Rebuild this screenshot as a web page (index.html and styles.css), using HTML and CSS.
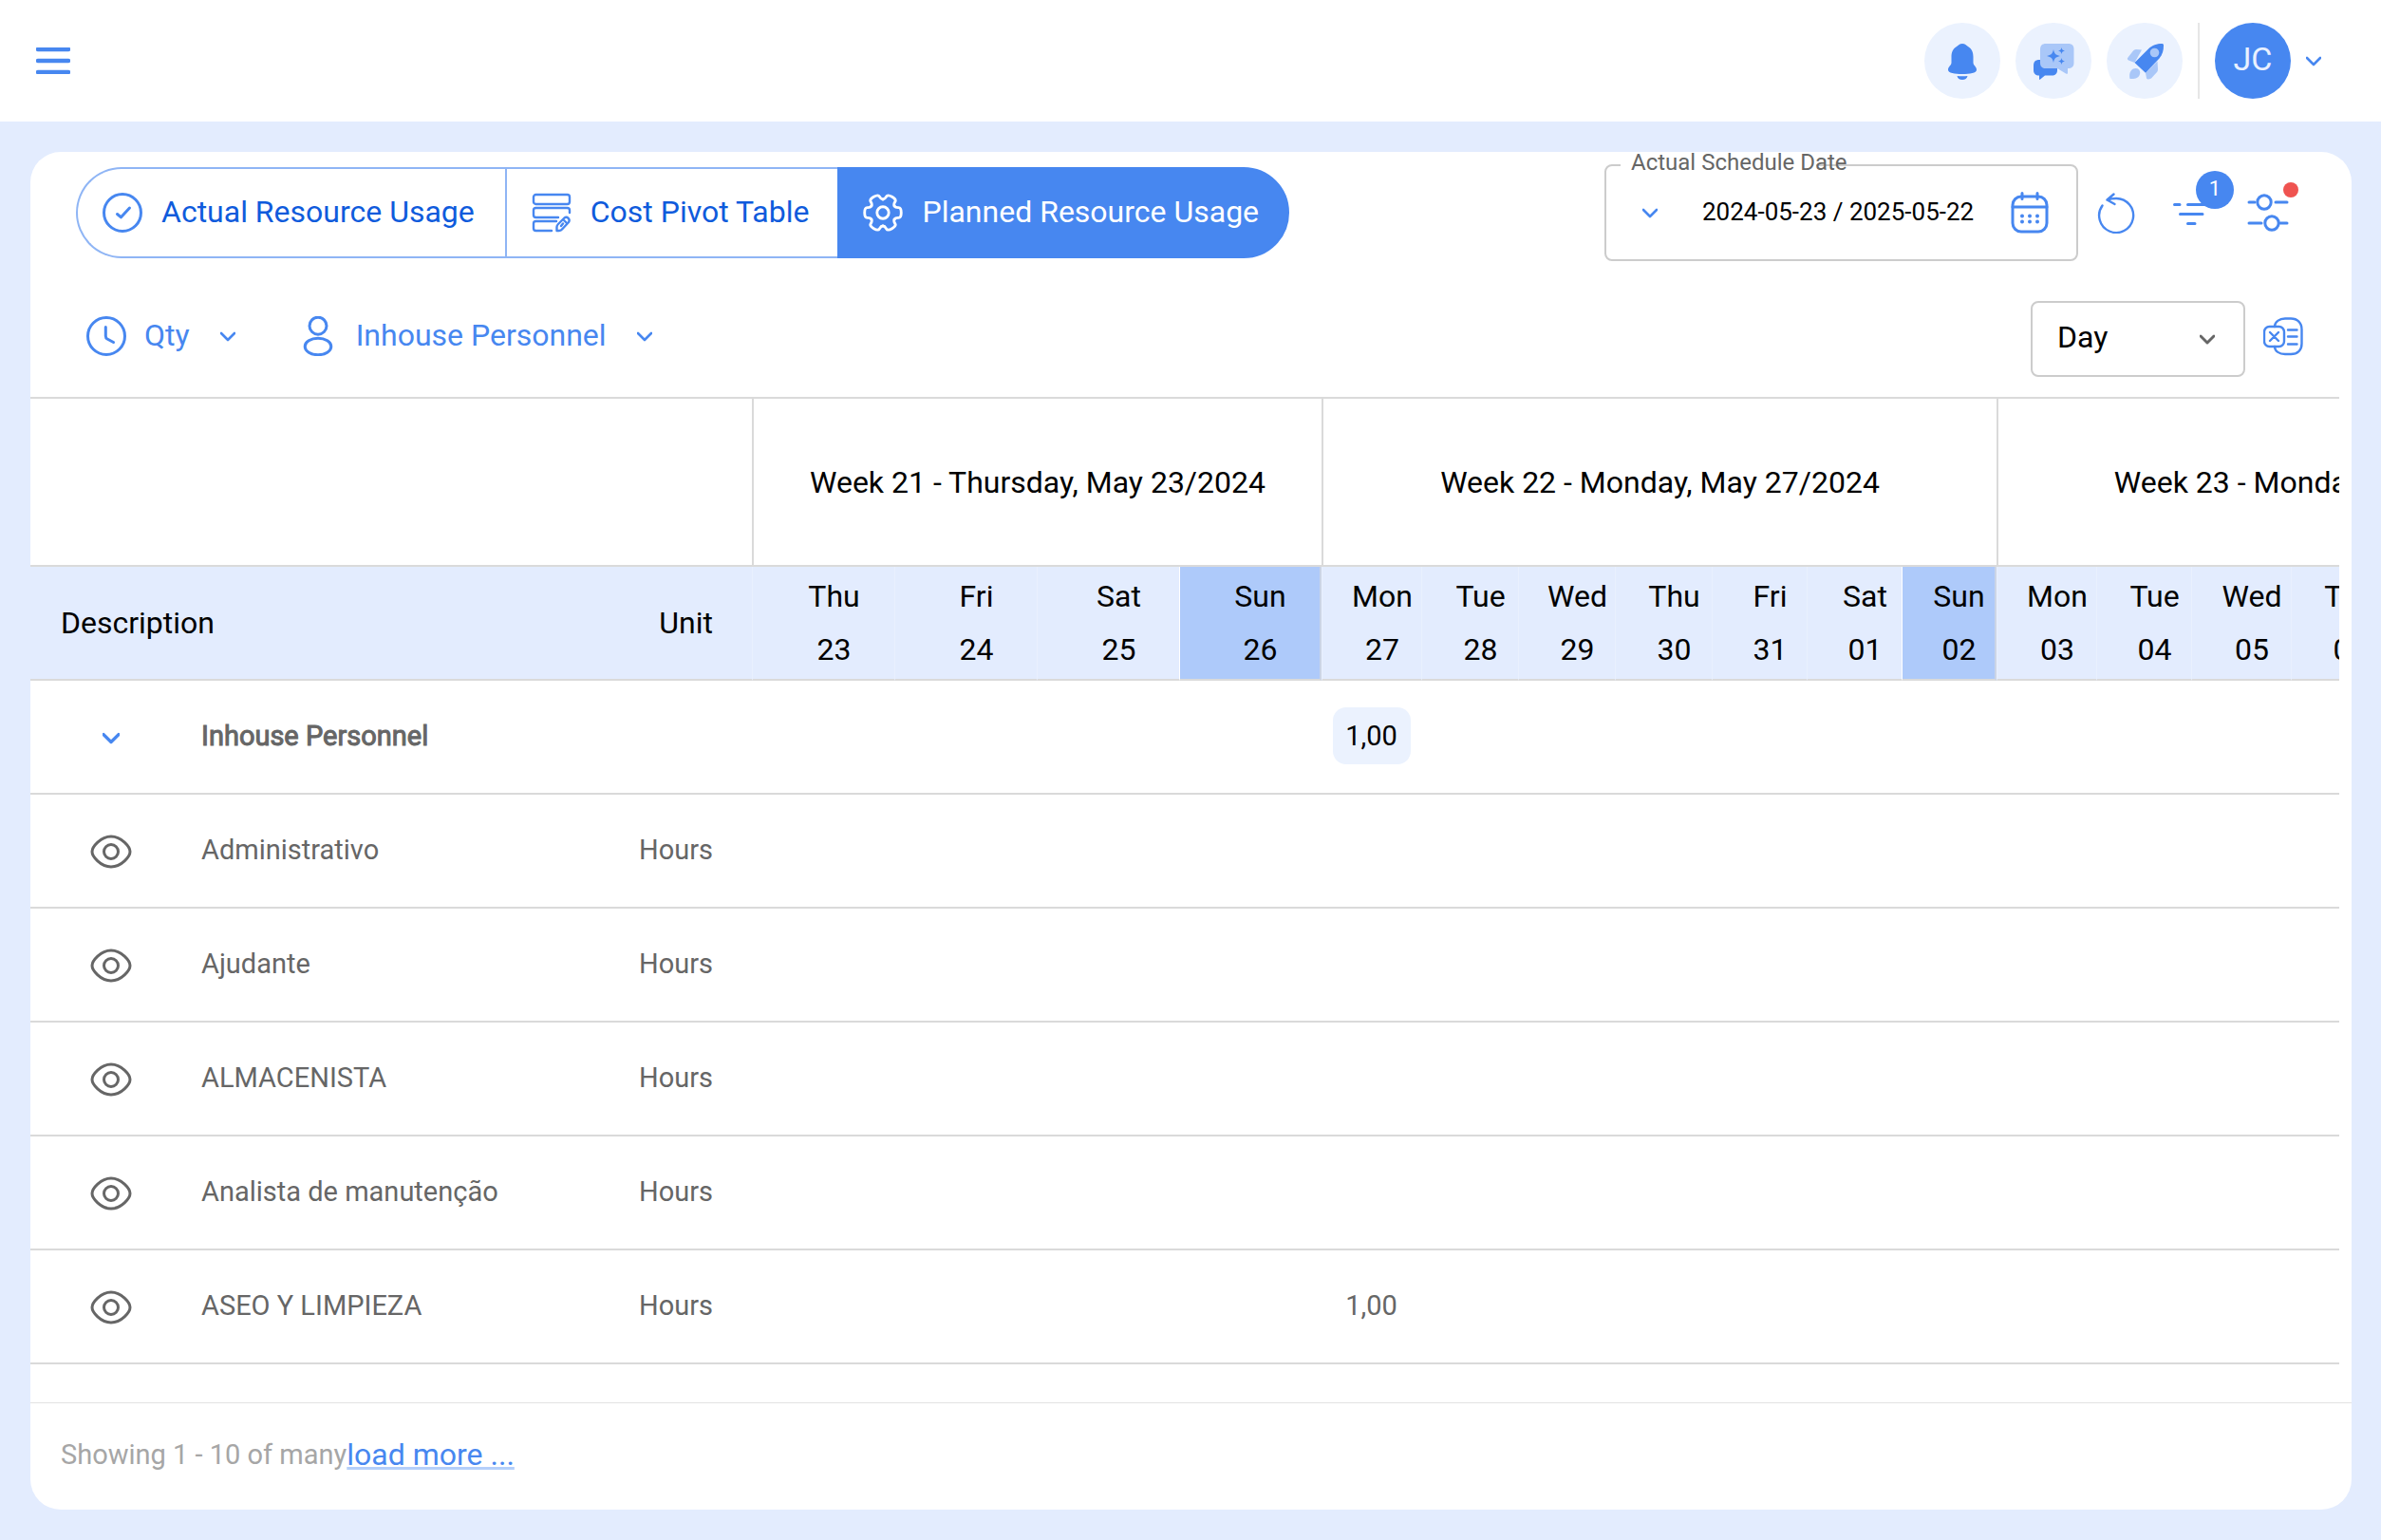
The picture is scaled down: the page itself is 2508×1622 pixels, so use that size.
FILE: index.html
```html
<!DOCTYPE html>
<html lang="en">
<head>
<meta charset="utf-8">
<meta name="viewport" content="width=device-width, initial-scale=1">
<title>Planned Resource Usage</title>
<link rel="stylesheet" href="styles.css">
</head>
<body>
<svg class="sprite" aria-hidden="true">
  <symbol id="chevron" viewBox="0 0 16 16"><path d="M1 5l7 7 7-7"/></symbol>
  <symbol id="eye" viewBox="-22 -22 44 44"><path d="M-20 0C-20-5-11-16 0-16S20-5 20 0 11 16 0 16-20 5-20 0z"/><circle r="7.5"/></symbol>
  <symbol id="sparkle" viewBox="-8 -8 16 16"><path d="M0-8C1.300-2.500 2.500-1.300 8 0 2.500 1.300 1.300 2.500 0 8-1.300 2.500-2.500 1.300-8 0-2.500-1.300-1.300-2.500 0-8z"/></symbol>
  <symbol id="cog" viewBox="-22 -22 44 44">
    <g id="cog-teeth">
      <path id="tooth" d="M12.700-7.300C13.900-5.300 15.900-5.600 17.300-5.600 19.600-5.600 20.200-4 20.200 0S19.600 5.600 17.300 5.600C15.900 5.600 13.900 5.300 12.700 7.300"/>
      <use href="#tooth" transform="rotate(60)"/><use href="#tooth" transform="rotate(120)"/><use href="#tooth" transform="rotate(180)"/><use href="#tooth" transform="rotate(240)"/><use href="#tooth" transform="rotate(300)"/>
    </g>
    <circle r="6.500"/>
  </symbol>
</svg>

<header class="topbar">
  <button class="menu-button" type="button" aria-label="Menu">
    <svg class="icon-menu" viewBox="0 0 36 28"><path d="M2 2h32M2 14h32M2 26h32"/></svg>
  </button>
  <div class="topbar-actions">
    <button class="round-button" type="button" aria-label="Notifications">
      <svg class="glyph" viewBox="-20 -20 40 40"><path class="solid" d="M0-18C3-18 4-16.500 6-15 10-12.500 11.500-9 11.500-4V2C11.500 5 15 6 15 9.500 15 13 8 14 0 14S-15 13-15 9.500C-15 6-11.500 5-11.500 2V-4C-11.500-9-10-12.500-6-15-4-16.500-3-18 0-18zM-5.500 16Q0 16.600 5.500 16C5 18.500 3 20 0 20S-5 18.500-5.500 16z"/></svg>
    </button>
    <button class="round-button" type="button" aria-label="Assistant">
      <svg class="glyph glyph-wide" viewBox="-22 -20 46 40">
        <path class="solid" d="M-14-1H0V15.500H-8L-13.500 20Q-14 20-14 19V15.500C-18 15.500-20 13.500-20 10V5C-20 1-18-1-14-1zM-2 0H5V10C5 13.500 3 15.500-1 15.500z"/>
        <path class="pale" d="M-7-18H16.500C20.500-18 22.500-16 22.500-12V2C22.500 6 20.500 8 16 8V13C16 14 15 14 14 13.500L5 8H-7C-11 8-13 6-13 2V-12C-13-16-11-18-7-18z"/>
        <use class="solid" href="#sparkle" x="-6" y="-12" width="14" height="14"/>
        <use class="solid" href="#sparkle" x="6" y="-14" width="7" height="7"/>
        <use class="solid" href="#sparkle" x="6" y="-3" width="7" height="7"/>
      </svg>
    </button>
    <button class="round-button" type="button" aria-label="What is new">
      <svg class="glyph" viewBox="-20 -20 40 40">
        <path class="pale" d="M-3-11.500L-10.500 2-17-.5Q-19-1.500-17.500-3.500L-12-10.500Q-11-12-9-12zM1 12.700L13.500 .5 14 9Q14 11 13 12L7 18.500Q3 20.500 2 18.500zM-15.500 19C-17 13-14 8-9.500 8-6 8-4 11-5 14-6 18-10 19.500-15.500 19z"/>
        <path class="solid" d="M20-16C20-11 19-7 15.500-2.500L1 12.700-10.500 2 4-12.500C8-16.500 13-18 18-18 19.500-18 20-17.500 20-16z"/>
        <circle class="pale" cx="10.500" cy="-8.500" r="4.800"/>
      </svg>
    </button>
    <span class="divider"></span>
    <button class="account" type="button" aria-label="Account">
      <span class="avatar">JC</span>
      <svg class="chevron"><use href="#chevron"/></svg>
    </button>
  </div>
</header>

<main class="panel">
  <div class="toolbar">
    <nav class="tabs" aria-label="Views">
      <button class="tab" type="button">
        <svg class="icon" viewBox="-21 -21 42 42"><circle r="19.500"/><path d="M-5.500 1.500L-1.500 4.800 7.500-5"/></svg>
        <span>Actual Resource Usage</span>
      </button>
      <button class="tab" type="button">
        <svg class="icon icon-fine" viewBox="0 0 42 42"><rect x="2" y="2" width="38" height="10" rx="2.500"/><path d="M40 21V18.500Q40 16 37.500 16H4.500Q2 16 2 18.500V23.500Q2 26 4.500 26H28M26 30H4.500Q2 30 2 32.500V37.500Q2 40 4.500 40H21M26.500 40V36Q26.500 34.500 28 33L34.500 26.500C37.500 24.500 41 28 39 31L32.500 38Q31 40 29 40zM33.500 28.500L37.500 32.500M31 35L33 32.500"/></svg>
        <span>Cost Pivot Table</span>
      </button>
      <button class="tab tab-active" type="button" aria-current="page">
        <svg class="icon" viewBox="-22 -22 44 44"><use href="#cog" x="-22" y="-22" width="44" height="44"/></svg>
        <span>Planned Resource Usage</span>
      </button>
    </nav>
    <div class="toolbar-end">
      <fieldset class="date-field">
        <legend><label for="schedule">Actual Schedule Date</label></legend>
        <div class="date-content">
          <button type="button" aria-label="Date presets"><svg class="chevron"><use href="#chevron"/></svg></button>
          <input id="schedule" type="text" value="2024-05-23 / 2025-05-22">
          <button type="button" aria-label="Open calendar">
            <svg class="icon icon-tool" viewBox="0 0 44 44"><rect x="4" y="5" width="36" height="37" rx="9"/><path d="M4 16H40M14 1.500V7.500M30 1.500V7.500"/><path class="dots" d="M14 25.500h0M22 25.500h0M30 25.500h0M14 31.500h0M22 31.500h0M30 31.500h0"/></svg>
          </button>
        </div>
      </fieldset>
      <div class="tools">
        <button class="tool" type="button" aria-label="Refresh">
          <svg class="icon icon-tool icon-fine" viewBox="0 0 44 44"><path d="M12.500 8.500Q17 7 22 7A18 18 0 1 1 7.500 14.500M19.500 2.500L12.500 8.500 20.500 13"/></svg>
        </button>
        <button class="tool" type="button" aria-label="Filter">
          <svg class="icon icon-tool" viewBox="0 0 44 44"><path d="M3.500 13.500H9M17.500 13.500H40M9.500 23.500H33M17.500 33.500H25"/></svg>
          <span class="badge">1</span>
        </button>
        <button class="tool" type="button" aria-label="Settings">
          <svg class="icon icon-tool" viewBox="0 0 44 44"><circle cx="18" cy="11" r="7.200"/><circle cx="26" cy="33" r="7.200"/><path d="M2 11H8M30 11H42M2 33H15M35 33H42"/></svg>
          <span class="dot"></span>
        </button>
      </div>
    </div>
  </div>

  <div class="filters">
    <button class="picker" type="button">
      <svg class="icon" viewBox="-21 -21 42 42"><circle r="19.500"/><path d="M-.7-9.500V0Q-.7 2 1 3L7.500 6.500"/></svg>
      <span>Qty</span>
      <svg class="chevron"><use href="#chevron"/></svg>
    </button>
    <button class="picker" type="button">
      <svg class="icon" viewBox="-21 -21 42 42"><circle cy="-10.800" r="9"/><ellipse cy="11" rx="13.800" ry="8.700"/></svg>
      <span>Inhouse Personnel</span>
      <svg class="chevron"><use href="#chevron"/></svg>
    </button>
    <div class="filters-end">
      <div class="select-box">
        <select aria-label="Period"><option>Day</option><option>Week</option><option>Month</option></select>
        <svg class="chevron"><use href="#chevron"/></svg>
      </div>
      <button class="export" type="button" aria-label="Export to Excel">
        <svg class="icon icon-fine" viewBox="0 0 42 42"><rect x="1" y="11" width="21" height="21" rx="5.500"/><path d="M12 11C12 6 17 2.500 23 2.500H29C36 2.500 40.500 7 40.500 14V29C40.500 36 36 40 29 40H23C17 40 12 37 12 32M7 17L16 26M16 17L7 26M26 14.500H35.500M26 21.500H35.500M26 29.500H35.500"/></svg>
      </button>
    </div>
  </div>

  <div class="table-scroll">
    <table class="usage">
      <colgroup>
        <col class="c-icon"><col class="c-name"><col class="c-unit">
        <col class="c-wide" span="4">
        <col class="c-mon"><col class="c-day" span="3"><col class="c-end" span="3">
        <col class="c-mon"><col class="c-end"><col class="c-mon"><col class="c-day" span="4">
      </colgroup>
      <thead>
        <tr class="weeks">
          <td colspan="3"></td>
          <th colspan="4" scope="colgroup">Week 21 - Thursday, May 23/2024</th>
          <th colspan="7" scope="colgroup">Week 22 - Monday, May 27/2024</th>
          <th colspan="7" scope="colgroup">Week 23 - Monday, June 03/2024</th>
        </tr>
        <tr class="days">
          <th class="description" colspan="2" scope="col">Description</th>
          <th class="unit" scope="col">Unit</th>
          <th scope="col">Thu<br>23</th><th scope="col">Fri<br>24</th><th scope="col">Sat<br>25</th><th class="sunday" scope="col">Sun<br>26</th>
          <th scope="col">Mon<br>27</th><th scope="col">Tue<br>28</th><th scope="col">Wed<br>29</th><th scope="col">Thu<br>30</th><th scope="col">Fri<br>31</th><th scope="col">Sat<br>01</th><th class="sunday" scope="col">Sun<br>02</th>
          <th scope="col">Mon<br>03</th><th scope="col">Tue<br>04</th><th scope="col">Wed<br>05</th><th scope="col">Thu<br>06</th><th scope="col">Fri<br>07</th><th scope="col">Sat<br>08</th><th class="sunday" scope="col">Sun<br>09</th>
        </tr>
      </thead>
      <tbody>
        <tr class="group">
          <td class="lead"><button type="button" aria-label="Collapse"><svg class="chevron chevron-bold"><use href="#chevron"/></svg></button></td>
          <td>Inhouse Personnel</td><td class="unit"></td><td colspan="4"></td>
          <td class="value"><span class="pill">1,00</span></td><td colspan="13"></td>
        </tr>
        <tr>
          <td class="lead"><button type="button" aria-label="View"><svg class="eye"><use href="#eye"/></svg></button></td>
          <td>Administrativo</td><td class="unit">Hours</td><td colspan="4"></td><td class="value"></td><td colspan="13"></td>
        </tr>
        <tr>
          <td class="lead"><button type="button" aria-label="View"><svg class="eye"><use href="#eye"/></svg></button></td>
          <td>Ajudante</td><td class="unit">Hours</td><td colspan="4"></td><td class="value"></td><td colspan="13"></td>
        </tr>
        <tr>
          <td class="lead"><button type="button" aria-label="View"><svg class="eye"><use href="#eye"/></svg></button></td>
          <td>ALMACENISTA</td><td class="unit">Hours</td><td colspan="4"></td><td class="value"></td><td colspan="13"></td>
        </tr>
        <tr>
          <td class="lead"><button type="button" aria-label="View"><svg class="eye"><use href="#eye"/></svg></button></td>
          <td>Analista de manutenção</td><td class="unit">Hours</td><td colspan="4"></td><td class="value"></td><td colspan="13"></td>
        </tr>
        <tr>
          <td class="lead"><button type="button" aria-label="View"><svg class="eye"><use href="#eye"/></svg></button></td>
          <td>ASEO Y LIMPIEZA</td><td class="unit">Hours</td><td colspan="4"></td><td class="value">1,00</td><td colspan="13"></td>
        </tr>
      </tbody>
    </table>
  </div>

  <footer class="pager">
    <span>Showing 1 - 10 of many</span><a href="#more">load more ...</a>
  </footer>
</main>
</body>
</html>
```

FILE: styles.css
```css
:root {
  --blue: #4787f0;
  --blue-deep: #0f5bdc;
  --blue-pale: #a9c7f8;
  --tint: #e3ecfe;
  --tint-light: #ebf2fe;
  --line: #dadada;
  --grey: #666;
}

* { box-sizing: border-box; }

body {
  margin: 0;
  min-height: 100vh;
  display: flex;
  flex-direction: column;
  background: var(--tint);
  color: #000;
  font: 400 32px/40px Roboto, "Liberation Sans", sans-serif;
}

button, input, select { font: inherit; color: inherit; }

button {
  display: flex;
  align-items: center;
  justify-content: center;
  padding: 0;
  border: 0;
  background: none;
  cursor: pointer;
}

.sprite { display: none; }

.icon, .chevron, .eye, .icon-menu {
  display: block;
  flex: none;
  fill: none;
  stroke: currentColor;
  stroke-width: 3;
  stroke-linecap: round;
  stroke-linejoin: round;
}

.icon { width: 42px; height: 42px; }
.icon-tool { width: 44px; height: 44px; }
.icon-fine { stroke-width: 2.4; }
.dots { stroke-width: 4; }
.chevron { width: 16px; height: 16px; overflow: visible; color: var(--blue); stroke-width: 2.6; }
.chevron-bold { width: 18px; height: 18px; stroke-width: 3; }
.eye { width: 44px; height: 44px; color: var(--grey); }
.icon-menu { width: 36px; height: 28px; stroke-width: 4.6; }

/* Top bar */
.topbar {
  display: flex;
  align-items: center;
  justify-content: space-between;
  height: 128px;
  padding: 0 63px 0 38px;
  background: #fff;
  color: var(--blue);
}

.topbar-actions { display: flex; align-items: center; gap: 16px; }

.round-button, .avatar { width: 80px; height: 80px; border-radius: 50%; }
.round-button { background: var(--tint-light); }
.glyph { width: 40px; height: 40px; }
.glyph-wide { width: 46px; }
.solid { fill: var(--blue); }
.pale { fill: var(--blue-pale); }
.divider { width: 2px; height: 80px; background: #e6e6e6; }
.account { gap: 16px; }

.avatar {
  display: flex;
  align-items: center;
  justify-content: center;
  padding-bottom: 4px;
  background: var(--blue);
  color: #e9f1ff;
  font-size: 34px;
}

/* Panel */
.panel {
  flex: 1;
  display: flex;
  flex-direction: column;
  margin: 32px;
  margin-right: 31px;
  background: #fff;
  border-radius: 32px;
  min-width: 0;
}

.toolbar {
  display: flex;
  justify-content: space-between;
  padding: 0 66px 0 48px;
}

.tabs { display: flex; height: 96px; margin-top: 16px; }

.tab {
  gap: 20px;
  padding: 0 30px 0 26px;
  border: 2px solid #8fb5f5;
  border-right: 0;
  color: var(--blue-deep);
  white-space: nowrap;
}

.tab span { padding-bottom: 2px; }
.tab .icon { color: var(--blue); }
.tab:first-child { padding-right: 32px; border-radius: 48px 0 0 48px; }
.tab:last-child { padding-left: 25px; border-right: 2px solid var(--blue); border-radius: 0 48px 48px 0; }
.tab-active { background: var(--blue); border-color: var(--blue); color: #fff; }
.tab-active .icon { color: #fff; }

.toolbar-end { display: flex; gap: 18px; }

.date-field {
  width: 499px;
  min-width: 0;
  margin: 0;
  padding: 0 27px 13px 38px;
  border: 2px solid #ccc;
  border-radius: 8px;
}

.date-field legend {
  width: 206px;
  margin-left: -23px;
  padding: 0 0 6px 11px;
  color: var(--grey);
  font-size: 24px;
  line-height: 22px;
  white-space: nowrap;
}

.date-content { display: flex; align-items: center; height: 72px; color: var(--blue); }

.date-content input {
  flex: 1;
  width: 0;
  min-width: 0;
  margin-left: 47px;
  padding: 0 0 2px;
  border: 0;
  background: none;
  color: #000;
  font-size: 26px;
}

.tools { display: flex; align-items: center; gap: 36px; height: 96px; margin-top: 16px; color: var(--blue); }
.tool { position: relative; }

.badge {
  position: absolute;
  left: 26px;
  top: -22px;
  width: 40px;
  height: 40px;
  border-radius: 50%;
  background: var(--blue);
  color: #fff;
  font-size: 22px;
  line-height: 38px;
}

.dot {
  position: absolute;
  left: 38px;
  top: -10px;
  width: 16px;
  height: 16px;
  border-radius: 50%;
  background: #ef5350;
}

.filters {
  display: flex;
  align-items: flex-start;
  gap: 66px;
  padding: 42px 51px 21px 59px;
  color: var(--blue);
}

.picker { height: 74px; gap: 19px; white-space: nowrap; }
.picker span { padding-bottom: 2px; }
.picker .chevron { margin-left: 13px; }

.filters-end { display: flex; gap: 19px; margin-left: auto; }
.export { height: 74px; }
.select-box { display: grid; align-items: center; }
.select-box > * { grid-area: 1 / 1; }

.select-box select {
  appearance: none;
  width: 226px;
  height: 80px;
  padding: 0 26px 4px;
  border: 2px solid #ccc;
  border-radius: 8px;
  background: #fff;
  color: #000;
}

.select-box .chevron { justify-self: end; margin-right: 32px; color: var(--grey); pointer-events: none; stroke-width: 3; }

/* Table */
.table-scroll {
  flex: 1;
  margin-right: 13px;
  overflow: auto;
  scrollbar-width: none;
  border-top: 2px solid var(--line);
}

.usage {
  width: 2779px;
  table-layout: fixed;
  border-collapse: separate;
  border-spacing: 0;
}

.c-icon { width: 180px; }
.c-name { width: 380px; }
.c-unit { width: 200px; }
.c-wide { width: 150px; }
.c-mon { width: 105px; }
.c-day { width: 102px; }
.c-end { width: 100px; }

.usage th { font-weight: 400; }
.usage th, .usage td { height: 120px; padding: 0; border-bottom: 2px solid var(--line); }

.usage .weeks th, .usage .weeks td { height: 177px; }
.usage .weeks th { border-left: 2px solid var(--line); }

.usage .days th {
  padding: 0 8px 0 30px;
  border-left: 1px solid #e9f0fe;
  background: var(--tint);
  line-height: 56px;
}

.usage .days .sunday { background: #aecafa; border-left-color: #fff; border-right: 2px solid #ccd5e6; }
.usage .days .description { padding-left: 32px; border-left: 0; text-align: left; }
.usage .days .unit, .usage .unit { padding-right: 41px; border-left: 0; text-align: right; }

.usage tbody td { color: var(--grey); font-size: 29px; padding-bottom: 2px; }
.usage tbody .lead { padding: 2px 0 0 63px; }
.lead button { width: 44px; height: 44px; }
.usage .group td { -webkit-text-stroke: 1px var(--grey); }
.usage tbody .value { text-align: center; }

.usage .pill {
  display: inline-block;
  width: 82px;
  border-radius: 14px;
  background: var(--tint-light);
  color: #000;
  line-height: 60px;
  -webkit-text-stroke: 0;
}

/* Footer */
.pager {
  display: flex;
  align-items: center;
  height: 113px;
  padding: 0 32px 4px;
  border-top: 1px solid #e3e3e3;
  color: #a6a6a6;
  font-size: 29px;
}

.pager a {
  color: var(--blue);
  font-size: 32px;
  text-decoration: underline;
  text-decoration-color: #b4cffa;
  text-decoration-thickness: 3px;
  text-decoration-skip-ink: none;
}
```
